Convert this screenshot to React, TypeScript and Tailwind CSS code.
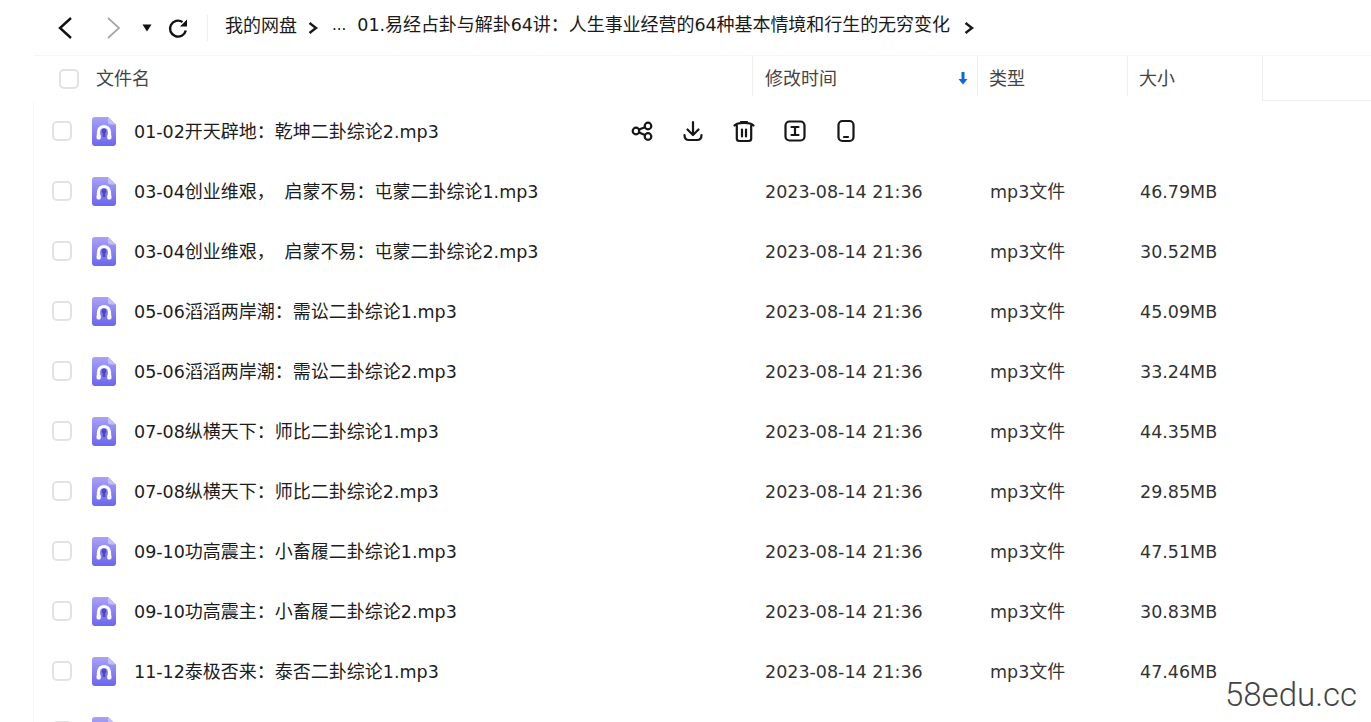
const FONT = "font-['DejaVu_Sans','Noto_Sans_CJK_SC',sans-serif]";

const rows = [
  { name: "01-02开天辟地：乾坤二卦综论2.mp3", date: "", type: "", size: "", hover: true },
  { name: "03-04创业维艰， 启蒙不易：屯蒙二卦综论1.mp3", date: "2023-08-14 21:36", type: "mp3文件", size: "46.79MB" },
  { name: "03-04创业维艰， 启蒙不易：屯蒙二卦综论2.mp3", date: "2023-08-14 21:36", type: "mp3文件", size: "30.52MB" },
  { name: "05-06滔滔两岸潮：需讼二卦综论1.mp3", date: "2023-08-14 21:36", type: "mp3文件", size: "45.09MB" },
  { name: "05-06滔滔两岸潮：需讼二卦综论2.mp3", date: "2023-08-14 21:36", type: "mp3文件", size: "33.24MB" },
  { name: "07-08纵横天下：师比二卦综论1.mp3", date: "2023-08-14 21:36", type: "mp3文件", size: "44.35MB" },
  { name: "07-08纵横天下：师比二卦综论2.mp3", date: "2023-08-14 21:36", type: "mp3文件", size: "29.85MB" },
  { name: "09-10功高震主：小畜履二卦综论1.mp3", date: "2023-08-14 21:36", type: "mp3文件", size: "47.51MB" },
  { name: "09-10功高震主：小畜履二卦综论2.mp3", date: "2023-08-14 21:36", type: "mp3文件", size: "30.83MB" },
  { name: "11-12泰极否来：泰否二卦综论1.mp3", date: "2023-08-14 21:36", type: "mp3文件", size: "47.46MB" },
];

// Latin runs are set slightly smaller than the CJK runs, as in the picture.
function T({ children }: { children: string }) {
  return (
    <>
      {children.split(/([\x00-\x7f]+)/).map((part, i) =>
        part === "" ? null : /^[\x00-\x7f]/.test(part) ? (
          <span key={i} className="text-[17.500px]">{part}</span>
        ) : (
          <span key={i}>{part}</span>
        )
      )}
    </>
  );
}

function AudioIcon({ id }: { id: string }) {
  return (
    <svg width="24" height="29" viewBox="0 0 24 29" className="block shrink-0">
      <defs>
        <linearGradient id={id} x1="0" y1="0" x2="0" y2="1">
          <stop offset="0" stopColor="#aaa2f5" />
          <stop offset="1" stopColor="#6a66ee" />
        </linearGradient>
      </defs>
      <path d="M3 0H16L24 7.500V26a3 3 0 0 1-3 3H3a3 3 0 0 1-3-3V3a3 3 0 0 1 3-3z" fill={`url(#${id})`} />
      <path d="M16 0V5a2.500 2.500 0 0 0 2.500 2.500H24z" fill="#c4bef8" />
      <path d="M6.500 21.500V15a5.500 5.500 0 0 1 11 0V21.500" fill="none" stroke="#fff" strokeWidth="3.200" />
      <rect x="4.600" y="17.500" width="4.200" height="5" rx="1.400" fill="#fff" />
      <rect x="15.200" y="17.500" width="4.200" height="5" rx="1.400" fill="#fff" />
      <path d="M12 11.500a2.600 2.600 0 0 1 1.300 4.800V20h-2.600v-3.700A2.600 2.600 0 0 1 12 11.500z" fill="#4f48c4" />
    </svg>
  );
}

function Box() {
  return <span className="block shrink-0 w-5 h-5 rounded-[5px] border-2 border-[#e2e2e2] bg-white" />;
}

function Chevron({ className = "" }: { className?: string }) {
  return (
    <svg width="10" height="14" viewBox="0 0 10 14" className={`shrink-0 ${className}`}>
      <path d="M1.500 2l6.500 5-6.500 5" fill="none" stroke="#1a1a1a" strokeWidth="2.400" />
    </svg>
  );
}

function RowActions() {
  const common = { fill: "none", stroke: "#161616", strokeWidth: 2.2, strokeLinecap: "round" as const, strokeLinejoin: "round" as const };
  return (
    <div className="flex items-center gap-[27px] ml-[10px] shrink-0">
      <svg width="24" height="24" viewBox="0 0 24 24" {...common}>
        <circle cx="18" cy="7" r="3.300" />
        <circle cx="18" cy="17.500" r="3.300" />
        <circle cx="6" cy="12" r="3.300" />
        <path d="M9 10.500l6-2.300M9 13.500l6 2.500" />
      </svg>
      <svg width="24" height="24" viewBox="0 0 24 24" {...common}>
        <path d="M12 3v12.500M6.500 10.500l5.500 5.500 5.500-5.500" />
        <path d="M3.500 16c0 3.500 2 5 4.500 5h8c2.500 0 4.500-1.500 4.500-5" />
      </svg>
      <svg width="24" height="24" viewBox="0 0 24 24" {...common}>
        <path d="M2.500 6.500c3-3.500 16-3.500 19 0" />
        <path d="M9 3h6" />
        <path d="M4.800 6.500V19.500a2.500 2.500 0 0 0 2.500 2.500h9.400a2.500 2.500 0 0 0 2.500-2.500V6.500" />
        <path d="M10 10.500v7M14 10.500v7" />
      </svg>
      <svg width="24" height="24" viewBox="0 0 24 24" {...common}>
        <rect x="2.500" y="2.500" width="19" height="19" rx="4" />
        <path d="M8.500 8h7M8.500 16h7M12 8v8" />
      </svg>
      <svg width="24" height="24" viewBox="0 0 24 24" {...common}>
        <rect x="4.500" y="2" width="15" height="20" rx="4" />
        <path d="M10 18h4" />
      </svg>
    </div>
  );
}

export default function App() {
  return (
    <div className={`relative w-[1371px] h-[722px] overflow-hidden bg-white text-[#1f1f1f] ${FONT}`}>
      <header className="flex items-center h-[55px] pl-[56px]">
        <svg width="20" height="24" viewBox="0 0 20 24" className="shrink-0">
          <path d="M15 2L4 12l11 10" fill="none" stroke="#111" strokeWidth="2.400" />
        </svg>
        <svg width="20" height="24" viewBox="0 0 20 24" className="ml-[27px] shrink-0">
          <path d="M5 2l11 10L5 22" fill="none" stroke="#a8a8a8" strokeWidth="1.800" />
        </svg>
        <svg width="10" height="8" viewBox="0 0 10 8" className="ml-[19px] shrink-0">
          <path d="M0.500 0.500h9L5 7.500z" fill="#111" />
        </svg>
        <svg width="22" height="22" viewBox="0 0 22 22" className="ml-[15px] shrink-0">
          <path d="M18.800 13.500A8 8 0 1 1 15.500 5" fill="none" stroke="#111" strokeWidth="2.400" />
          <path d="M20 2.500v7h-7z" fill="#111" />
        </svg>
        <span className="ml-[18px] w-px h-[26px] bg-[#eeeeee] shrink-0" />
        <nav className="flex items-center ml-[17px] text-[18px] leading-none whitespace-nowrap text-[#1a1a1a]">
          <span className="pb-[4px]">我的网盘</span>
          <Chevron className="ml-[11px]" />
          <span className="ml-[14px] pb-[4px] text-[15px]">...</span>
          <span className="ml-[11px] pb-[4px] tracking-[-0.05px]"><T>01.易经占卦与解卦64讲：人生事业经营的64种基本情境和行生的无穷变化</T></span>
          <Chevron className="ml-[14px]" />
        </nav>
      </header>

      <div className="ml-[33px]">
        <div className="flex h-[46px] pl-px text-[18px] text-[#444] leading-none">
          <div className="flex items-center w-[718px] pl-[25px] shrink-0 border-t border-[#f6f6f6]">
            <Box />
            <span className="ml-[17px]">文件名</span>
          </div>
          <div className="relative flex items-center w-[225px] pl-[12px] pt-[6px] border-l border-t border-l-[#eeeeee] border-t-[#f6f6f6] h-[41px] shrink-0">
            修改时间
            <svg width="10" height="14" viewBox="0 0 10 14" className="absolute right-[9px] top-[15px]">
              <path d="M5 1v8" stroke="#0a6bd8" strokeWidth="3" />
              <path d="M0.500 8h9L5 13.500z" fill="#0a6bd8" />
            </svg>
          </div>
          <div className="flex items-center w-[150px] pl-[11px] pt-[6px] border-l border-t border-l-[#eeeeee] border-t-[#f6f6f6] h-[41px] shrink-0">类型</div>
          <div className="flex items-center w-[135px] pl-[11px] pt-[6px] border-l border-t border-l-[#eeeeee] border-t-[#f6f6f6] h-[41px] shrink-0">大小</div>
          <div className="flex-1 border border-r-0 border-l-[#eeeeee] border-t-[#f6f6f6] border-b-[#eeeeee] h-[46px]" />
        </div>

        <div className="border-l border-[#f7f7f7]">
          {rows.map((r, i) => (
            <div key={r.name} className="flex items-center h-[60px]">
              <div className="flex items-center w-[731px] pl-[18px] shrink-0">
                <Box />
                <span className="ml-[20px]"><AudioIcon id={`audio-${i}`} /></span>
                <span className={`ml-[18px] pt-[2px] text-[18px] leading-none whitespace-nowrap text-[#1c1c1c] shrink-0 [word-spacing:4px] ${r.hover ? "w-[486px]" : ""}`}><T>{r.name}</T></span>
                {r.hover && <RowActions />}
              </div>
              <div className="w-[225px] pt-[2px] text-[18px] leading-none whitespace-nowrap shrink-0 text-[#333]"><T>{r.date}</T></div>
              <div className="w-[150px] pt-[2px] text-[18px] leading-none whitespace-nowrap shrink-0 text-[#333]"><T>{r.type}</T></div>
              <div className="pt-[2px] text-[18px] leading-none whitespace-nowrap text-[#333]"><T>{r.size}</T></div>
            </div>
          ))}

          <div className="flex items-center h-[60px] pl-[18px]">
            <Box />
            <span className="ml-[20px]"><AudioIcon id="audio-last" /></span>
          </div>
        </div>
      </div>

      <div className="absolute left-[1225px] top-[678px] text-[33px] leading-none font-['Roboto',sans-serif] font-light text-[#444] [text-shadow:0_0_3px_#fff]">
        58edu.cc
      </div>
    </div>
  );
}
